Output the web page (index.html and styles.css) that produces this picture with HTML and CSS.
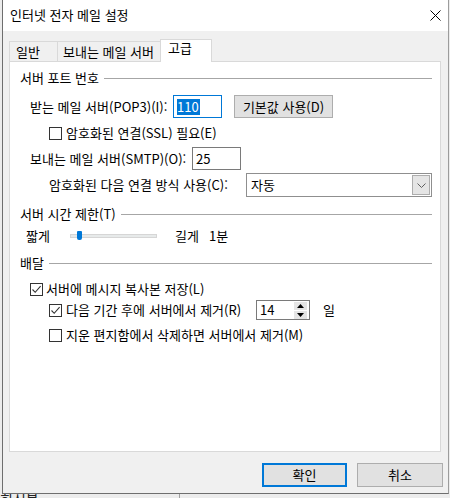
FILE: index.html
```html
<!DOCTYPE html>
<html lang="ko">
<head>
    <meta charset="UTF-8">
    <meta name="viewport" content="width=device-width, initial-scale=1.0">
    <title>인터넷 전자 메일 설정</title>
    <link rel="stylesheet" href="styles.css">
</head>
<body>
    <div class="window">
        <div class="titlebar">
            <span class="title">인터넷 전자 메일 설정</span>
            <svg class="close" width="11" height="11" viewBox="0 0 11 11" aria-label="닫기">
                <path d="M0.5 0.5 L10.5 10.5 M10.5 0.5 L0.5 10.5" stroke="#000" stroke-width="1" fill="none"/>
            </svg>
        </div>

        <div class="content">
            <div class="tabs">
                <div class="tab tab-general">일반</div>
                <div class="tab tab-outgoing">보내는 메일 서버</div>
                <div class="tab tab-advanced active">고급</div>
            </div>

            <div class="panel">
                <div class="group-title group-ports">
                    <span>서버 포트 번호</span>
                    <div class="group-line"></div>
                </div>

                <div class="row row-pop3">
                    <span class="label label-pop3">받는 메일 서버(POP3)(I):</span>
                    <div class="textbox focused"><span class="selected">110</span></div>
                    <button class="btn btn-port">기본값 사용(D)</button>
                </div>

                <div class="row check-row row-ssl">
                    <span class="check"></span>
                    <span class="check-label">암호화된 연결(SSL) 필요(E)</span>
                </div>

                <div class="row row-smtp">
                    <span class="label label-smtp">보내는 메일 서버(SMTP)(O):</span>
                    <div class="textbox">25</div>
                </div>

                <div class="row row-enc">
                    <span class="label label-enc">암호화된 다음 연결 방식 사용(C):</span>
                    <div class="combo">
                        <span class="combo-value">자동</span>
                        <span class="combo-arrow">
                            <svg width="9" height="5" viewBox="0 0 9 5">
                                <path d="M0.5 0.5 L4.5 4.5 L8.5 0.5" stroke="#606060" stroke-width="1" fill="none"/>
                            </svg>
                        </span>
                    </div>
                </div>

                <div class="group-title group-timeout">
                    <span>서버 시간 제한(T)</span>
                    <div class="group-line"></div>
                </div>

                <div class="row row-slider">
                    <span class="slider-short">짧게</span>
                    <div class="track"><span class="thumb"></span></div>
                    <span class="slider-long">길게</span>
                    <span class="slider-value">1분</span>
                </div>

                <div class="group-title group-delivery">
                    <span>배달</span>
                    <div class="group-line"></div>
                </div>

                <div class="row check-row row-leave">
                    <span class="check checked">
                        <svg width="11" height="11" viewBox="0 0 11 11"><path d="M1.5 5.5 L4.2 8.3 L9.6 2.2" stroke="#333" stroke-width="1.1" fill="none"/></svg>
                    </span>
                    <span class="check-label">서버에 메시지 복사본 저장(L)</span>
                </div>

                <div class="row check-row row-remove">
                    <span class="check checked">
                        <svg width="11" height="11" viewBox="0 0 11 11"><path d="M1.5 5.5 L4.2 8.3 L9.6 2.2" stroke="#333" stroke-width="1.1" fill="none"/></svg>
                    </span>
                    <span class="check-label label-remove">다음 기간 후에 서버에서 제거(R)</span>
                    <div class="spin">
                        <span class="spin-value">14</span>
                        <div class="spin-buttons">
                            <span class="spin-btn">
                                <svg width="7" height="4" viewBox="0 0 7 4"><path d="M0 4 L3.5 0 L7 4 Z" fill="#000"/></svg>
                            </span>
                            <span class="spin-btn">
                                <svg width="7" height="4" viewBox="0 0 7 4"><path d="M0 0 L3.5 4 L7 0 Z" fill="#000"/></svg>
                            </span>
                        </div>
                    </div>
                    <span class="spin-unit">일</span>
                </div>

                <div class="row check-row row-deleted">
                    <span class="check"></span>
                    <span class="check-label">지운 편지함에서 삭제하면 서버에서 제거(M)</span>
                </div>
            </div>

            <div class="footer">
                <button class="btn btn-ok">확인</button>
                <button class="btn btn-cancel">취소</button>
            </div>
        </div>
    </div>

    <div class="behind">
        <span class="behind-text">회신불</span>
        <div class="behind-divider"></div>
    </div>
</body>
</html>
```

FILE: styles.css
```css
body {
    margin: 0;
    height: 498px;
    overflow: hidden;
    background: #ececec;
    font-family: "Noto Sans CJK KR", sans-serif;
    font-size: 13px;
    color: #000;
}

.window {
    margin-left: 2px;
    width: 447px;
    box-sizing: border-box;
    background: #f0f0f0;
    border-left: 1px solid #6e6e6e;
    border-right: 1px solid #9c9c9c;
    border-bottom: 1px solid #6e6e6e;
}

/* Title bar */
.titlebar {
    height: 31px;
    background: #ffffff;
    display: flex;
    align-items: center;
    justify-content: space-between;
    padding: 0 7px 0 7px;
    box-sizing: border-box;
}

.title {
    line-height: 16px;
    margin-top: -1px;
}

.close {
    display: block;
    margin-top: -1px;
}

.content {
    padding: 8px 5px 6px 6px;
}

/* Tabs */
.tabs {
    display: flex;
    align-items: flex-end;
    height: 22px;
}

.tab {
    height: 20px;
    box-sizing: border-box;
    border: 1px solid #d9d9d9;
    border-bottom: none;
    background: #f0f0f0;
    line-height: 16px;
    padding-top: 2px;
    white-space: nowrap;
    overflow: hidden;
}

.tab + .tab {
    margin-left: -1px;
}

.tab-general {
    width: 49px;
    padding-left: 6px;
}

.tab-outgoing {
    width: 104px;
    padding-left: 5px;
}

.tab-advanced {
    width: 52px;
    padding-left: 7px;
}

.tab.active {
    height: 23px;
    padding-top: 0;
    background: #ffffff;
    margin-bottom: -1px;
    position: relative;
    z-index: 1;
}

/* Panel */
.panel {
    width: 432px;
    height: 391px;
    box-sizing: border-box;
    background: #ffffff;
    border: 1px solid #d9d9d9;
    padding: 0 8px 0 10px;
}

.group-title {
    display: flex;
    align-items: center;
    height: 16px;
    line-height: 16px;
    white-space: nowrap;
}

.group-line {
    flex: 1;
    border-top: 1px solid #a6a6a6;
    margin-left: 5px;
}

.group-ports {
    margin-top: 8px;
}

.group-timeout {
    margin-top: 9px;
}

.group-delivery {
    margin-top: 11px;
}

.row {
    display: flex;
    align-items: center;
    line-height: 16px;
    white-space: nowrap;
}

.label {
    flex-shrink: 0;
}

.row-pop3 {
    margin-top: 9px;
    height: 23px;
    padding-left: 10px;
}

.label-pop3 {
    width: 143px;
}

.row-smtp {
    margin-top: 7px;
    height: 23px;
    padding-left: 10px;
}

.label-smtp {
    width: 162px;
}

.row-enc {
    margin-top: 3px;
    height: 24px;
    padding-left: 29px;
}

.label-enc {
    width: 197px;
}

.textbox {
    width: 49px;
    height: 23px;
    flex-shrink: 0;
    box-sizing: border-box;
    border: 1px solid #7a7a7a;
    background: #ffffff;
    padding-left: 3px;
    display: flex;
    align-items: center;
}

.textbox.focused {
    border-color: #0078d7;
}

.selected {
    background: #0078d7;
    color: #ffffff;
    padding-right: 1px;
}

.btn {
    font-family: "Noto Sans CJK KR", sans-serif;
    font-size: 13px;
    color: #000;
    background: #e1e1e1;
    border: 1px solid #adadad;
    padding: 0;
    line-height: 16px;
    box-sizing: border-box;
}

.btn-port {
    margin-left: 12px;
    width: 99px;
    height: 23px;
}

/* Combo box */
.combo {
    width: 186px;
    height: 24px;
    flex-shrink: 0;
    box-sizing: border-box;
    border: 1px solid #8f8f8f;
    background: #ffffff;
    display: flex;
    align-items: center;
    justify-content: space-between;
    padding: 1px;
}

.combo-value {
    padding-left: 3px;
}

.combo-arrow {
    width: 18px;
    height: 20px;
    box-sizing: border-box;
    border: 1px solid #adadad;
    background: #e5e5e5;
    display: flex;
    align-items: center;
    justify-content: center;
}

.combo-arrow svg {
    display: block;
}

/* Checkboxes */
.check-row {
    height: 14px;
}

.check {
    width: 13px;
    height: 13px;
    box-sizing: border-box;
    border: 1px solid #333333;
    background: #ffffff;
    flex-shrink: 0;
    display: flex;
    align-items: center;
    justify-content: center;
}

.check svg {
    display: block;
}

.check-label {
    margin-left: 4px;
}

.row-ssl {
    margin-top: 8px;
    padding-left: 29px;
}

.row-leave {
    margin-top: 11px;
    padding-left: 10px;
}

.row-leave .check-label {
    margin-left: 3px;
}

.row-remove {
    margin-top: 4px;
    height: 20px;
    padding-left: 29px;
}

.label-remove {
    width: 190px;
    flex-shrink: 0;
}

.row-deleted {
    margin-top: 8px;
    padding-left: 29px;
}

/* Slider */
.row-slider {
    margin-top: 6px;
    height: 16px;
    padding-left: 6px;
}

.slider-short {
    width: 44px;
    flex-shrink: 0;
}

.track {
    width: 87px;
    height: 4px;
    flex-shrink: 0;
    box-sizing: border-box;
    background: #e7eaea;
    border: 1px solid #d6d6d6;
    position: relative;
}

.thumb {
    position: absolute;
    left: 6px;
    top: -4px;
    width: 5px;
    height: 9px;
    background: #0078d7;
    border-radius: 1px 1px 2px 2px;
}

.slider-long {
    margin-left: 18px;
    width: 34px;
    flex-shrink: 0;
}

/* Spin box */
.spin {
    width: 54px;
    height: 20px;
    flex-shrink: 0;
    box-sizing: border-box;
    border: 1px solid #7a7a7a;
    background: #ffffff;
    display: flex;
    align-items: center;
    justify-content: space-between;
    padding: 1px 2px 1px 3px;
}

.spin-buttons {
    display: flex;
    flex-direction: column;
    gap: 1px;
}

.spin-btn {
    width: 13px;
    height: 8px;
    background: #e5e5e5;
    display: flex;
    align-items: center;
    justify-content: center;
}

.spin-btn svg {
    display: block;
}

.spin-unit {
    margin-left: 13px;
}

/* Footer buttons */
.footer {
    display: flex;
    justify-content: flex-end;
    gap: 10px;
    margin-top: 11px;
}

.btn-ok {
    width: 85px;
    height: 24px;
    border: 2px solid #0078d7;
}

.btn-cancel {
    width: 86px;
    height: 24px;
}

/* Window behind the dialog */
.behind {
    display: flex;
    height: 4px;
    overflow: hidden;
}

.behind-text {
    width: 179px;
    font-size: 14px;
    line-height: 16px;
    margin-top: -3px;
    color: #222;
}

.behind-divider {
    border-left: 1px solid #a0a0a0;
}
```
